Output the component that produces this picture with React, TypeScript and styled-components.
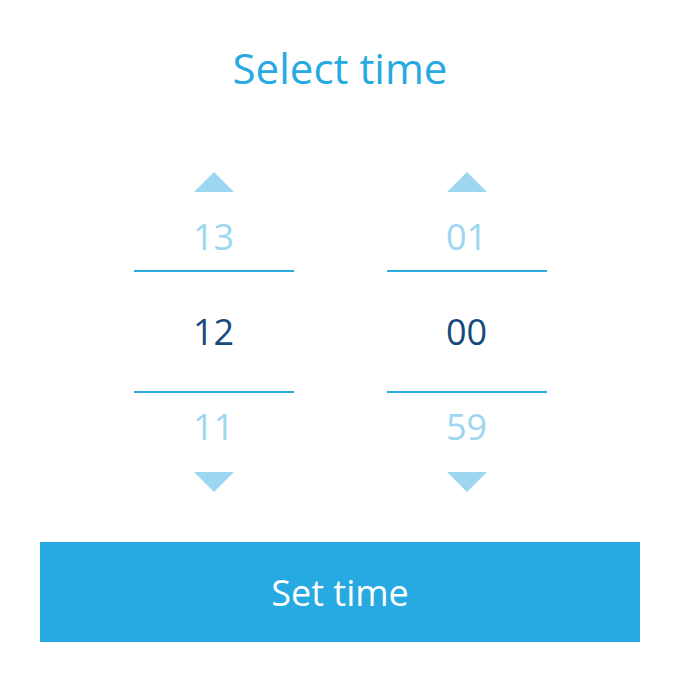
import React, { useState } from "react";
import styled, { createGlobalStyle } from "styled-components";

const GlobalStyle = createGlobalStyle`
  html, body {
    margin: 0;
    padding: 0;
    background: #ffffff;
  }
  body {
    font-family: "Open Sans", "Noto Sans", "Liberation Sans", sans-serif;
  }
`;

const Page = styled.div`
  width: 680px;
  height: 682px;
  box-sizing: border-box;
  padding-top: 47px;
  display: flex;
  flex-direction: column;
  align-items: center;
  background: #ffffff;
`;

const Title = styled.h1`
  margin: 0;
  font-size: 42px;
  line-height: 42px;
  font-weight: 400;
  color: #27a9e1;
`;

const Picker = styled.div`
  margin-top: 83px;
  display: flex;
  gap: 93px;
`;

const Column = styled.div`
  width: 160px;
  display: flex;
  flex-direction: column;
  align-items: center;
`;

const ArrowButton = styled.button<{ $dir: "up" | "down" }>`
  width: 40px;
  height: 20px;
  padding: 0;
  border: none;
  background: transparent;
  cursor: pointer;
  display: block;
  svg {
    display: block;
  }
`;

const Neighbor = styled.div<{ $pos: "above" | "below" }>`
  width: 100%;
  height: ${(p) => (p.$pos === "above" ? "78px" : "79px")};
  box-sizing: border-box;
  display: flex;
  justify-content: center;
  align-items: ${(p) => (p.$pos === "above" ? "flex-end" : "flex-start")};
  padding: ${(p) => (p.$pos === "above" ? "0 0 15px" : "16px 0 0")};
  font-size: 36px;
  line-height: 36px;
  color: #9dd6f0;
`;

const Current = styled.div`
  width: 100%;
  height: 119px;
  display: flex;
  justify-content: center;
  align-items: center;
  font-size: 36px;
  line-height: 36px;
  color: #174a7c;
  border-top: 2px solid #29abe2;
  border-bottom: 2px solid #29abe2;
`;

const SetButton = styled.button`
  margin-top: 50px;
  width: 600px;
  height: 100px;
  border: none;
  background: #26aae1;
  color: #ffffff;
  font-family: inherit;
  font-size: 36px;
  font-weight: 400;
  cursor: pointer;
`;

const Triangle: React.FC<{ dir: "up" | "down" }> = ({ dir }) => (
  <svg width="40" height="20" viewBox="0 0 40 20">
    <polygon
      points={dir === "up" ? "20,0 40,20 0,20" : "0,0 40,0 20,20"}
      fill="#9dd6f0"
    />
  </svg>
);

const pad = (n: number) => String(n).padStart(2, "0");

const Spinner: React.FC<{
  value: number;
  min: number;
  max: number;
  onChange: (v: number) => void;
}> = ({ value, min, max, onChange }) => {
  const span = max - min + 1;
  const wrap = (v: number) => ((((v - min) % span) + span) % span) + min;
  return (
    <Column>
      <ArrowButton $dir="up" onClick={() => onChange(wrap(value + 1))}>
        <Triangle dir="up" />
      </ArrowButton>
      <Neighbor $pos="above">{pad(wrap(value + 1))}</Neighbor>
      <Current>{pad(value)}</Current>
      <Neighbor $pos="below">{pad(wrap(value - 1))}</Neighbor>
      <ArrowButton $dir="down" onClick={() => onChange(wrap(value - 1))}>
        <Triangle dir="down" />
      </ArrowButton>
    </Column>
  );
};

export default function App() {
  const [hour, setHour] = useState(12);
  const [minute, setMinute] = useState(0);
  return (
    <>
      <GlobalStyle />
      <Page>
        <Title>Select time</Title>
        <Picker>
          <Spinner value={hour} min={0} max={23} onChange={setHour} />
          <Spinner value={minute} min={0} max={59} onChange={setMinute} />
        </Picker>
        <SetButton>Set time</SetButton>
      </Page>
    </>
  );
}
